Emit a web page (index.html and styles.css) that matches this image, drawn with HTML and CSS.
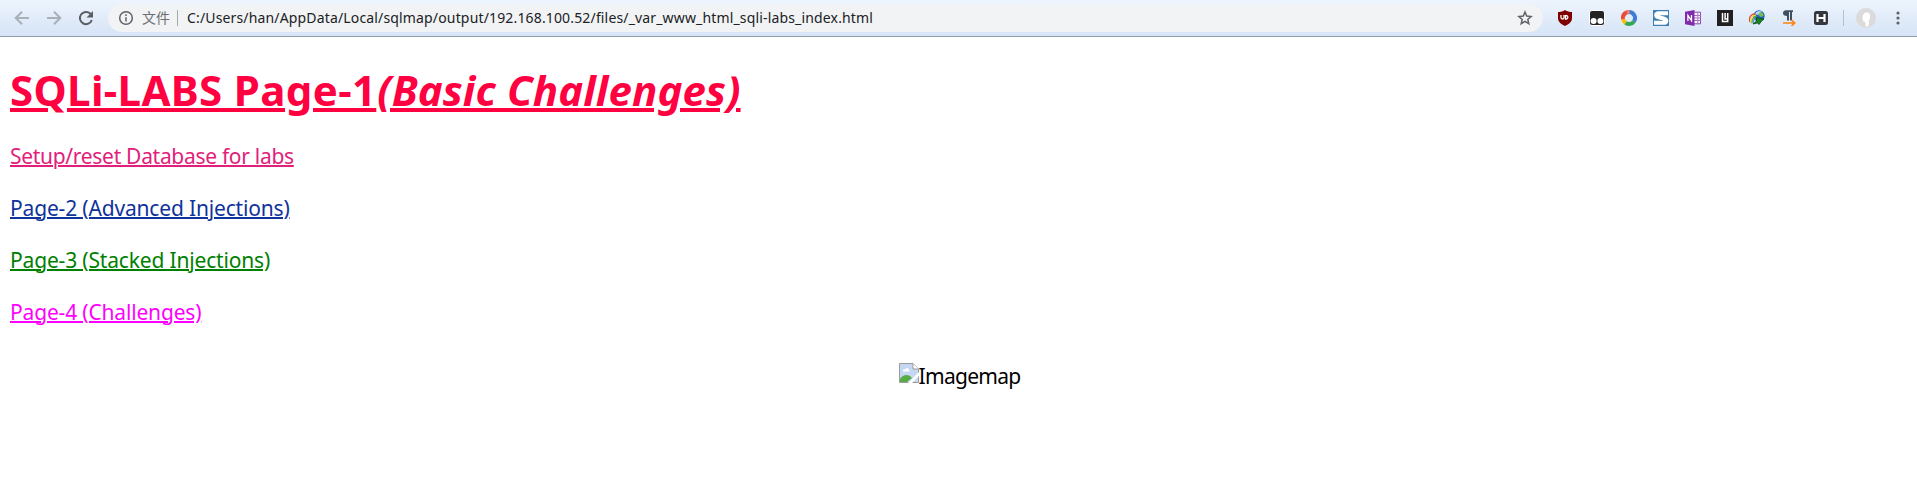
FILE: index.html
```
<!DOCTYPE html>
<html lang="en">
<head>
<meta charset="utf-8">
<title>SQLi-LABS</title>
<link rel="stylesheet" href="styles.css">
</head>
<body>
<header class="toolbar">
  <nav class="nav">
    <svg width="16" height="16" viewBox="0 0 16 16" class="dim"><path d="M15 8H2M8 1.7 1.7 8 8 14.3"/></svg>
    <svg width="16" height="16" viewBox="0 0 16 16" class="dim"><path d="M1 8h13M8 1.7 14.3 8 8 14.3"/></svg>
    <svg width="16" height="16" viewBox="0 0 16 16" class="reload"><path d="M13.8 10A6.1 6.1 0 1 1 12.2 3.6L14 5.4"/><path class="tip" d="M15 1v6.5H8.5z"/></svg>
  </nav>
  <div class="address">
    <svg class="info" width="16" height="16" viewBox="0 0 16 16"><circle cx="8" cy="8" r="6.3"/><path d="M8 7.2v4.3M8 4.3v1.8"/></svg>
    <span class="scheme">文件</span>
    <span class="rule"></span>
    <span class="url">C:/Users/han/AppData/Local/sqlmap/output/192.168.100.52/files/_var_www_html_sqli-labs_index.html</span>
    <svg class="star" width="16" height="16" viewBox="0 0 16 16"><path d="M8 2l1.7 4.1 4.4.4-3.3 2.9 1 4.3L8 11.4l-3.8 2.3 1-4.3-3.3-2.9 4.4-.4z"/></svg>
  </div>
  <div class="extensions">
    <svg width="16" height="16" viewBox="0 0 16 16"><path fill="#800000" d="M8 0c2 1.500 4.500 2 7 2v6c0 4-3 6-7 8-4-2-7-4-7-8V2c2.500 0 5-.5 7-2z"/><path fill="none" stroke="#fff" stroke-width="1.300" d="M4 5v2.500a1.400 1.400 0 0 0 3 0V5M8.500 5.600h1.300a1.900 1.900 0 0 1 0 3.400H8.500z"/></svg>
    <svg width="16" height="16" viewBox="0 0 16 16"><rect x=".5" y=".5" width="15" height="15" rx="2.500" fill="#242424" stroke="#fff"/><circle cx="4.600" cy="11" r="3" fill="#fff"/><circle cx="11.400" cy="11" r="3" fill="#fff"/></svg>
    <svg width="16" height="16" viewBox="0 0 16 16" fill="none" stroke-width="4"><path stroke="#ea4b3c" d="M2.200 6A6 6 0 0 1 8 2"/><path stroke="#f2836b" d="M6 2.300A6 6 0 0 1 9 2.100"/><path stroke="#3f7bd9" d="M8.500 2A6 6 0 0 1 13 11.300"/><path stroke="#36a853" d="M13 11.300A6 6 0 0 1 4.500 12.900"/><path stroke="#fbbc05" d="M4.500 12.900A6 6 0 0 1 2.200 9"/><path stroke="#ea4b3c" d="M2 9.200A6 6 0 0 1 2.400 5.500"/></svg>
    <svg width="16" height="16" viewBox="0 0 16 16"><path fill="#3c7fb1" d="M0 0h16v16H0z"/><path fill="none" stroke="#fff" stroke-width="4" d="M15 3.200H5.500C2.500 3.200 2.500 6.500 5 7l5.500 1.500c4 1 3.500 4.300 0 4.300H1"/></svg>
    <svg width="16" height="16" viewBox="0 0 16 16"><path fill="#fff" stroke="#8e43b5" d="M8 2.200h7.500v11.600H8z"/><path stroke="#a46bc2" d="M9 5.500h3.500M9 8h3.500M9 10.500h3.500M13 5.500h3M13 8h3M13 10.500h3M12.800 2v12"/><path fill="#7f2bac" d="M0 1.700 9.500 0v16L0 14.300z"/><path fill="none" stroke="#fff" stroke-width="1.300" d="M2.900 11V5.300l3.600 5.400V5"/></svg>
    <svg width="16" height="16" viewBox="0 0 16 16"><path fill="#202020" d="M0 0h16v16H0z"/><path fill="none" stroke="#fff" stroke-width="1.500" d="M5.500 3v8.500h5.200V3M8.100 3v6h2"/></svg>
    <svg width="16" height="16" viewBox="0 0 16 16"><circle cx="10" cy="6" r="5.700" fill="#2264c8"/><path fill="#b5daf5" d="M6 4a5 5 0 0 1 7-2.500L9 5z"/><path fill="#79bd46" d="m11 2 3 1 .5 3-3 1-2-2z"/><g fill="none" stroke-width="1.300"><path stroke="#e34a33" d="M1 12C-1 7 3 3.500 6.500 4"/><path stroke="#f5d535" d="M1.800 13C1 8 4 5 7 5.200"/><path stroke="#58ab42" d="M3 13.300C2.500 9 5 6.500 7.500 6.400"/><path stroke="#4b8fd8" d="M4.300 13C4 10 6 8 8 7.600"/></g><path fill="#178421" stroke="#063908" stroke-width=".7" d="m7.500 7.500 7.500 1.500-2 1.500-3 4-1.500-1.500-4.500 1 3.500-3z"/></svg>
    <svg width="16" height="16" viewBox="0 0 16 16"><path fill="#405060" d="M2 3.200C2 1 3.500.300 5 .300h7V2h-1v8.500H9V2H8v8.500H6V6C3.500 6 2 5 2 3.200z"/><path fill="none" stroke="#ff820e" stroke-width="1.700" d="M2 13h11M10.500 10l3.200 3-3.200 3"/></svg>
    <svg width="16" height="16" viewBox="0 0 16 16"><rect x="1" y="1" width="14" height="14" rx="2.500" fill="#34373b"/><path fill="none" stroke="#fff" stroke-width="2.200" d="M4.500 4v8M11.500 4v8M4.500 8h7"/></svg>
  </div>
  <span class="divider"></span>
  <svg class="avatar" width="20" height="20" viewBox="0 0 20 20"><circle cx="10" cy="10" r="10" fill="#dbdbdb"/><path fill="#fff" d="M10.500 4.500c3 0 3.800 2.300 3.600 4.800-.1 1.700-.8 2.700-1.300 3.500 0 2 .2 4.200-.8 5.700H9.500c.3-2 .2-3.500-.4-4.500-2-.5-2.700-2.300-2.500-4.500.1-2.500 1.300-5 3.900-5z"/></svg>
  <svg class="dots" width="4" height="14" viewBox="0 0 4 14"><circle cx="2" cy="2" r="1.600"/><circle cx="2" cy="7" r="1.600"/><circle cx="2" cy="12" r="1.600"/></svg>
</header>
<main class="page">
  <h1 class="title"><span class="title-main">SQLi-LABS Page-1</span><i class="title-sub">(Basic Challenges)</i></h1>
  <div class="links">
    <a class="setup">Setup/reset Database for labs</a>
    <a class="advanced">Page-2 (Advanced Injections)</a>
    <a class="stacked">Page-3 (Stacked Injections)</a>
    <a class="challenges">Page-4 (Challenges)</a>
  </div>
  <div class="imagemap">
    <svg width="20" height="20" viewBox="0 0 20 20"><path fill="#c6d7f4" stroke="#9b9b9b" d="M.5.500H14L19.500 6v13.500H.5z"/><path fill="#fff" stroke="#9b9b9b" d="M14 .500V6h5.500"/><path fill="#fff" d="M4 8c0-2 2-2 2.300-1C7 4 10 5 9.500 7c1.500 0 1 1.500.5 1.500H4z"/><path fill="#56ad43" d="M1 19v-3c3-5 9-5 12-1l-5 4z"/><path fill="#fff" d="M9 20 20 9v4l-7 7z"/></svg><span>Imagemap</span>
  </div>
</main>
</body>
</html>
```
FILE: styles.css
```
body {
  margin: 0;
  background: #fff;
  font-family: "Noto Sans", "Noto Sans CJK SC", sans-serif;
}
svg { display: block; flex: none; }
.toolbar {
  box-sizing: border-box;
  display: flex;
  align-items: center;
  height: 37px;
  padding: 0 17px 0 14px;
  border-bottom: 1px solid #8e9eb1;
  background: linear-gradient(#edf4fd, #d6e4f6);
}
.nav { display: flex; gap: 16px; width: 94px; }
.nav svg { fill: none; stroke: #5a5e63; stroke-width: 2; }
.nav .dim { stroke: #a8b0ba; }
.nav .tip { fill: #5a5e63; stroke: none; }
.address {
  box-sizing: border-box;
  display: flex;
  align-items: center;
  width: 1435px;
  height: 28px;
  padding: 0 10px;
  border-radius: 14px;
  background: #f1f3f4;
}
.info, .star { fill: none; stroke: #5f6368; stroke-width: 1.5; }
.scheme {
  width: 28px;
  margin-left: 8px;
  color: #6b6f74;
  font: 14px/26px "Noto Sans CJK SC", sans-serif;
  padding-bottom: 2px;
}
.rule { width: 1px; height: 16px; margin: 0 9px 0 7px; background: #a5a8ab; }
.url { color: #202124; font-size: 14px; line-height: 28px; letter-spacing: 0.155px; white-space: nowrap; }
.star { margin-left: auto; }
.extensions { display: flex; gap: 16px; margin-left: 14px; }
.divider { width: 1px; height: 16px; margin-left: 14px; background: #b4c0cf; }
.avatar { margin-left: 12px; }
.dots { margin-left: auto; fill: #5f6368; }
.page { padding: 25px 8px 0 10px; }
.title {
  margin: 0 0 12px;
  color: #ff0040;
  font-size: 42px;
  line-height: 56px;
  white-space: nowrap;
}
.title-main, .title-sub { text-decoration: underline 4px; text-underline-offset: 2px; }
.title-main { letter-spacing: 0.35px; }
.title-sub { margin-left: 1px; letter-spacing: 0.1px; }
.links { display: flex; flex-direction: column; align-items: flex-start; }
.links a {
  font-size: 21px;
  line-height: 52px;
  letter-spacing: -0.17px;
  text-decoration: underline 2px;
  text-underline-offset: 1px;
}
.links .setup { color: #e2207a; letter-spacing: -0.3px; }
.advanced { color: #0f339c; }
.stacked { color: #008000; }
.challenges { color: #f0f; }
.imagemap {
  display: flex;
  justify-content: center;
  align-items: center;
  height: 52px;
  margin-top: 12px;
  color: #000;
  font-size: 21px;
  letter-spacing: -0.72px;
}
.imagemap svg { margin-top: -6px; }
```
